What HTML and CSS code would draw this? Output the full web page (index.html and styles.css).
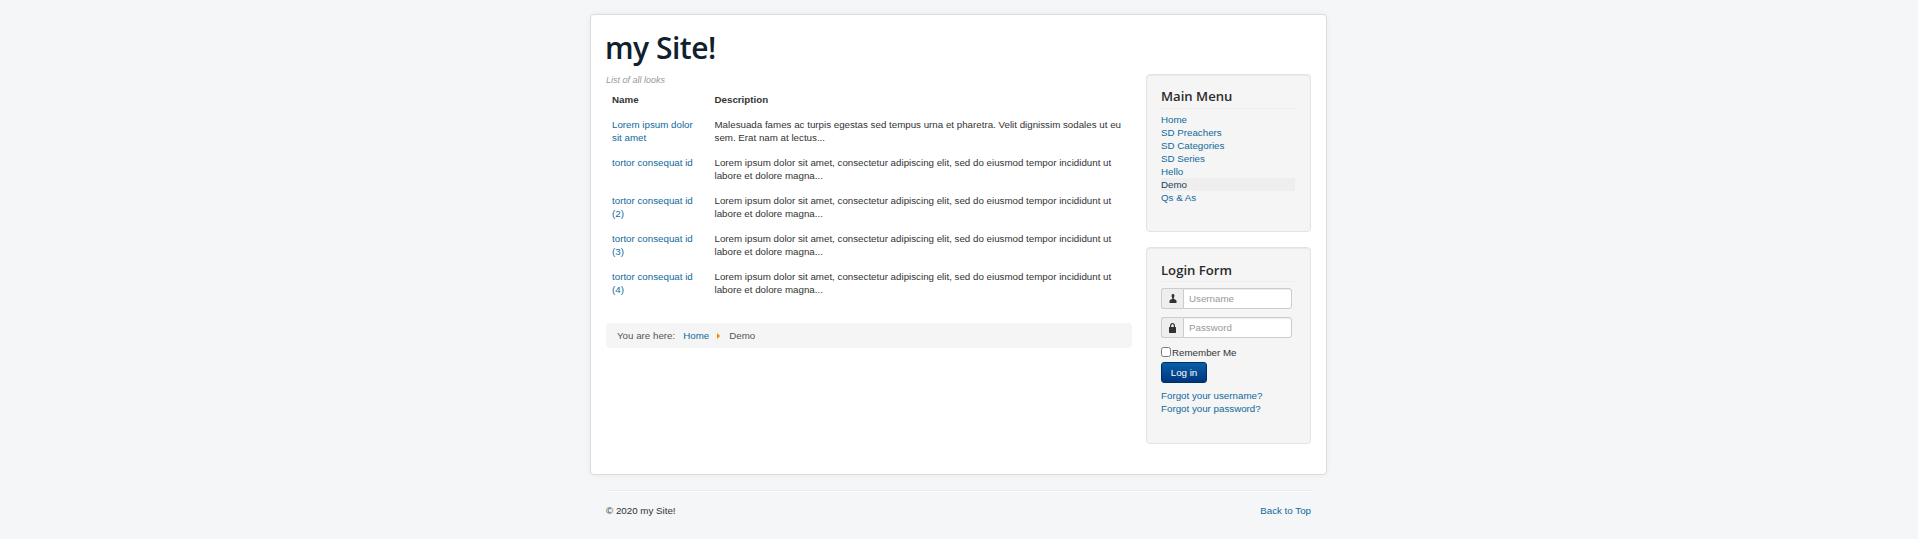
FILE: index.html
```html
<!DOCTYPE html>
<html lang="en">
<head>
    <meta charset="UTF-8">
    <title>Demo - my Site!</title>
    <link rel="stylesheet" href="styles.css">
</head>
<body>
    <div class="body">
        <div class="card">
            <div class="brand">my Site!</div>
            <div class="row">
                <main class="content">
                    <div class="caption">List of all looks</div>
                    <table class="looks">
                        <thead>
                            <tr><th class="col-name">Name</th><th>Description</th></tr>
                        </thead>
                        <tbody>
                            <tr>
                                <td><a href="#">Lorem ipsum dolor sit amet</a></td>
                                <td>Malesuada fames ac turpis egestas sed tempus urna et pharetra. Velit dignissim sodales ut eu sem. Erat nam at lectus...</td>
                            </tr>
                            <tr>
                                <td><a href="#">tortor consequat id</a></td>
                                <td>Lorem ipsum dolor sit amet, consectetur adipiscing elit, sed do eiusmod tempor incididunt ut labore et dolore magna...</td>
                            </tr>
                            <tr>
                                <td><a href="#">tortor consequat id (2)</a></td>
                                <td>Lorem ipsum dolor sit amet, consectetur adipiscing elit, sed do eiusmod tempor incididunt ut labore et dolore magna...</td>
                            </tr>
                            <tr>
                                <td><a href="#">tortor consequat id (3)</a></td>
                                <td>Lorem ipsum dolor sit amet, consectetur adipiscing elit, sed do eiusmod tempor incididunt ut labore et dolore magna...</td>
                            </tr>
                            <tr>
                                <td><a href="#">tortor consequat id (4)</a></td>
                                <td>Lorem ipsum dolor sit amet, consectetur adipiscing elit, sed do eiusmod tempor incididunt ut labore et dolore magna...</td>
                            </tr>
                        </tbody>
                    </table>
                    <div class="breadcrumb">
                        <span class="here">You are here:</span>
                        <a href="#">Home</a>
                        <svg class="crumb-arrow" width="3" height="6" viewBox="0 0 3 6"><path d="M0 0L3 3L0 6Z" fill="#f08a00"/></svg>
                        <span>Demo</span>
                    </div>
                </main>
                <aside class="sidebar">
                    <div class="well well-menu">
                        <h3 class="well-title">Main Menu</h3>
                        <ul class="menu">
                            <li><a href="#">Home</a></li>
                            <li><a href="#">SD Preachers</a></li>
                            <li><a href="#">SD Categories</a></li>
                            <li><a href="#">SD Series</a></li>
                            <li><a href="#">Hello</a></li>
                            <li class="current"><a href="#">Demo</a></li>
                            <li><a href="#">Qs &amp; As</a></li>
                        </ul>
                    </div>
                    <div class="well well-login">
                        <h3 class="well-title">Login Form</h3>
                        <div class="input-group">
                            <span class="addon">
                                <svg width="8" height="9" viewBox="0 0 8 9"><path d="M2.600 1.500C2.600.5 3.200 0 4 0s1.400.5 1.400 1.500c0 .9-.2 1.900-.6 2.500-.3.5-.2.9.3 1.100l1.500.7c.6.300.9.700.9 1.300V9H.5V7.100c0-.6.300-1 .9-1.300l1.500-.7c.5-.2.600-.6.300-1.100-.4-.6-.6-1.600-.6-2.500z" fill="#333"/></svg>
                            </span>
                            <input type="text" class="field" placeholder="Username">
                        </div>
                        <div class="input-group">
                            <span class="addon">
                                <svg width="7" height="10" viewBox="0 0 7 10"><path d="M1 4V2.800C1 1.200 2.100 0 3.500 0S6 1.200 6 2.800V4h.5c.3 0 .5.200.5.500v5c0 .3-.2.500-.5.500h-6C.2 10 0 9.800 0 9.500v-5C0 4.200.2 4 .5 4zm1.200 0h2.600V2.800c0-.9-.5-1.600-1.300-1.600s-1.300.7-1.300 1.600z" fill="#333"/></svg>
                            </span>
                            <input type="password" class="field" placeholder="Password">
                        </div>
                        <label class="remember"><input type="checkbox" class="check">Remember Me</label>
                        <button class="btn-login" type="button">Log in</button>
                        <ul class="login-links">
                            <li><a href="#">Forgot your username?</a></li>
                            <li><a href="#">Forgot your password?</a></li>
                        </ul>
                    </div>
                </aside>
            </div>
        </div>
        <footer class="footer">
            <hr class="rule">
            <div class="footer-row">
                <span>&copy; 2020 my Site!</span>
                <a href="#">Back to Top</a>
            </div>
        </footer>
    </div>
</body>
</html>
```
FILE: styles.css
```css
html {
    background: #fff;
}
body {
    margin: 0;
    font-family: 'Liberation Sans', Arial, sans-serif;
    font-size: 9.75px;
    line-height: 13px;
    color: #333;
}
a {
    color: #0f6a9c;
    text-decoration: none;
}
.body {
    background: #f4f6f7;
    padding: 14px 1px 0 0;
    height: 525px;
}
.card {
    width: 705px;
    height: 429px;
    margin: 0 auto;
    padding: 15px;
    background: #fff;
    border: 1px solid #dcdcdc;
    border-radius: 4px;
    box-shadow: 0 0 6px rgba(0, 0, 0, 0.05);
}
.brand {
    font-family: 'Open Sans', sans-serif;
    font-size: 30px;
    line-height: 36px;
    font-weight: 600;
    letter-spacing: -0.5px;
    color: #10202c;
    margin: 0 0 8px -1px;
}
.row {
    display: flex;
    justify-content: space-between;
}
.content {
    width: 526px;
}
.caption {
    font-style: italic;
    color: #999;
    font-size: 9px;
    line-height: 12px;
}
.looks {
    width: 100%;
    border-collapse: collapse;
    table-layout: fixed;
}
.looks th {
    text-align: left;
    padding: 7px 6px 6px;
}
.col-name {
    width: 90.5px;
}
.looks td {
    vertical-align: top;
    padding: 6px;
}
.breadcrumb {
    display: flex;
    align-items: center;
    height: 25px;
    margin-top: 21px;
    padding: 0 11px;
    background: #f5f5f5;
    border-radius: 4px;
    color: #555;
}
.here {
    margin-right: 8px;
}
.crumb-arrow {
    margin: 1px 9px 0 8px;
}
.sidebar {
    width: 165px;
}
.well {
    box-sizing: border-box;
    padding: 11px 15px 11px 14px;
    margin-bottom: 15px;
    background: #f5f5f5;
    border: 1px solid #e3e3e3;
    border-radius: 4px;
    box-shadow: inset 0 1px 1px rgba(0, 0, 0, 0.05);
}
.well-menu {
    height: 158px;
}
.well-login {
    height: 197px;
}
.well-title {
    margin: 0 0 4px;
    padding-bottom: 2px;
    font-family: 'Open Sans', sans-serif;
    font-size: 13.125px;
    line-height: 20px;
    font-weight: 550;
    color: #2b2b2b;
    border-bottom: 1px solid #eee;
}
.well-login .well-title {
    margin-bottom: 6px;
    padding: 1px 0;
}
.menu,
.login-links {
    list-style: none;
    margin: 0;
    padding: 0;
}
.menu a,
.login-links a {
    display: block;
}
.current {
    background: #eee;
}
.current a {
    color: #1c3f55;
}
.input-group {
    display: flex;
    height: 21px;
}
.input-group + .input-group {
    margin-top: 8px;
}
.addon {
    box-sizing: border-box;
    width: 22px;
    display: flex;
    align-items: center;
    justify-content: center;
    background: #eee;
    border: 1px solid #ccc;
    border-right: 0;
    border-radius: 3px 0 0 3px;
}
.field {
    box-sizing: border-box;
    width: 109px;
    height: 100%;
    padding: 0 5px;
    font-family: inherit;
    font-size: 9.75px;
    color: #555;
    background: #fff;
    border: 1px solid #ccc;
    border-radius: 0 3px 3px 0;
    box-shadow: inset 0 1px 1px rgba(0, 0, 0, 0.075);
}
.field::placeholder {
    color: #999;
}
.remember {
    display: flex;
    align-items: center;
    height: 14px;
    margin-top: 7px;
}
.check {
    width: 10px;
    height: 10px;
    margin: 0 1px 0 0;
}
.btn-login {
    display: block;
    width: 46px;
    height: 21px;
    margin: 3px 0 6px;
    padding: 0;
    font-family: inherit;
    font-size: 9.75px;
    color: #fff;
    background: linear-gradient(#0860a8, #00357f);
    border: 1px solid #002f5f;
    border-radius: 3px;
}
.footer {
    width: 705px;
    margin: 0 auto;
}
.rule {
    margin: 15px 0 0;
    border: 0;
    border-top: 1px solid #eee;
    border-bottom: 1px solid #fff;
}
.footer-row {
    display: flex;
    justify-content: space-between;
    margin-top: 12px;
}
```
